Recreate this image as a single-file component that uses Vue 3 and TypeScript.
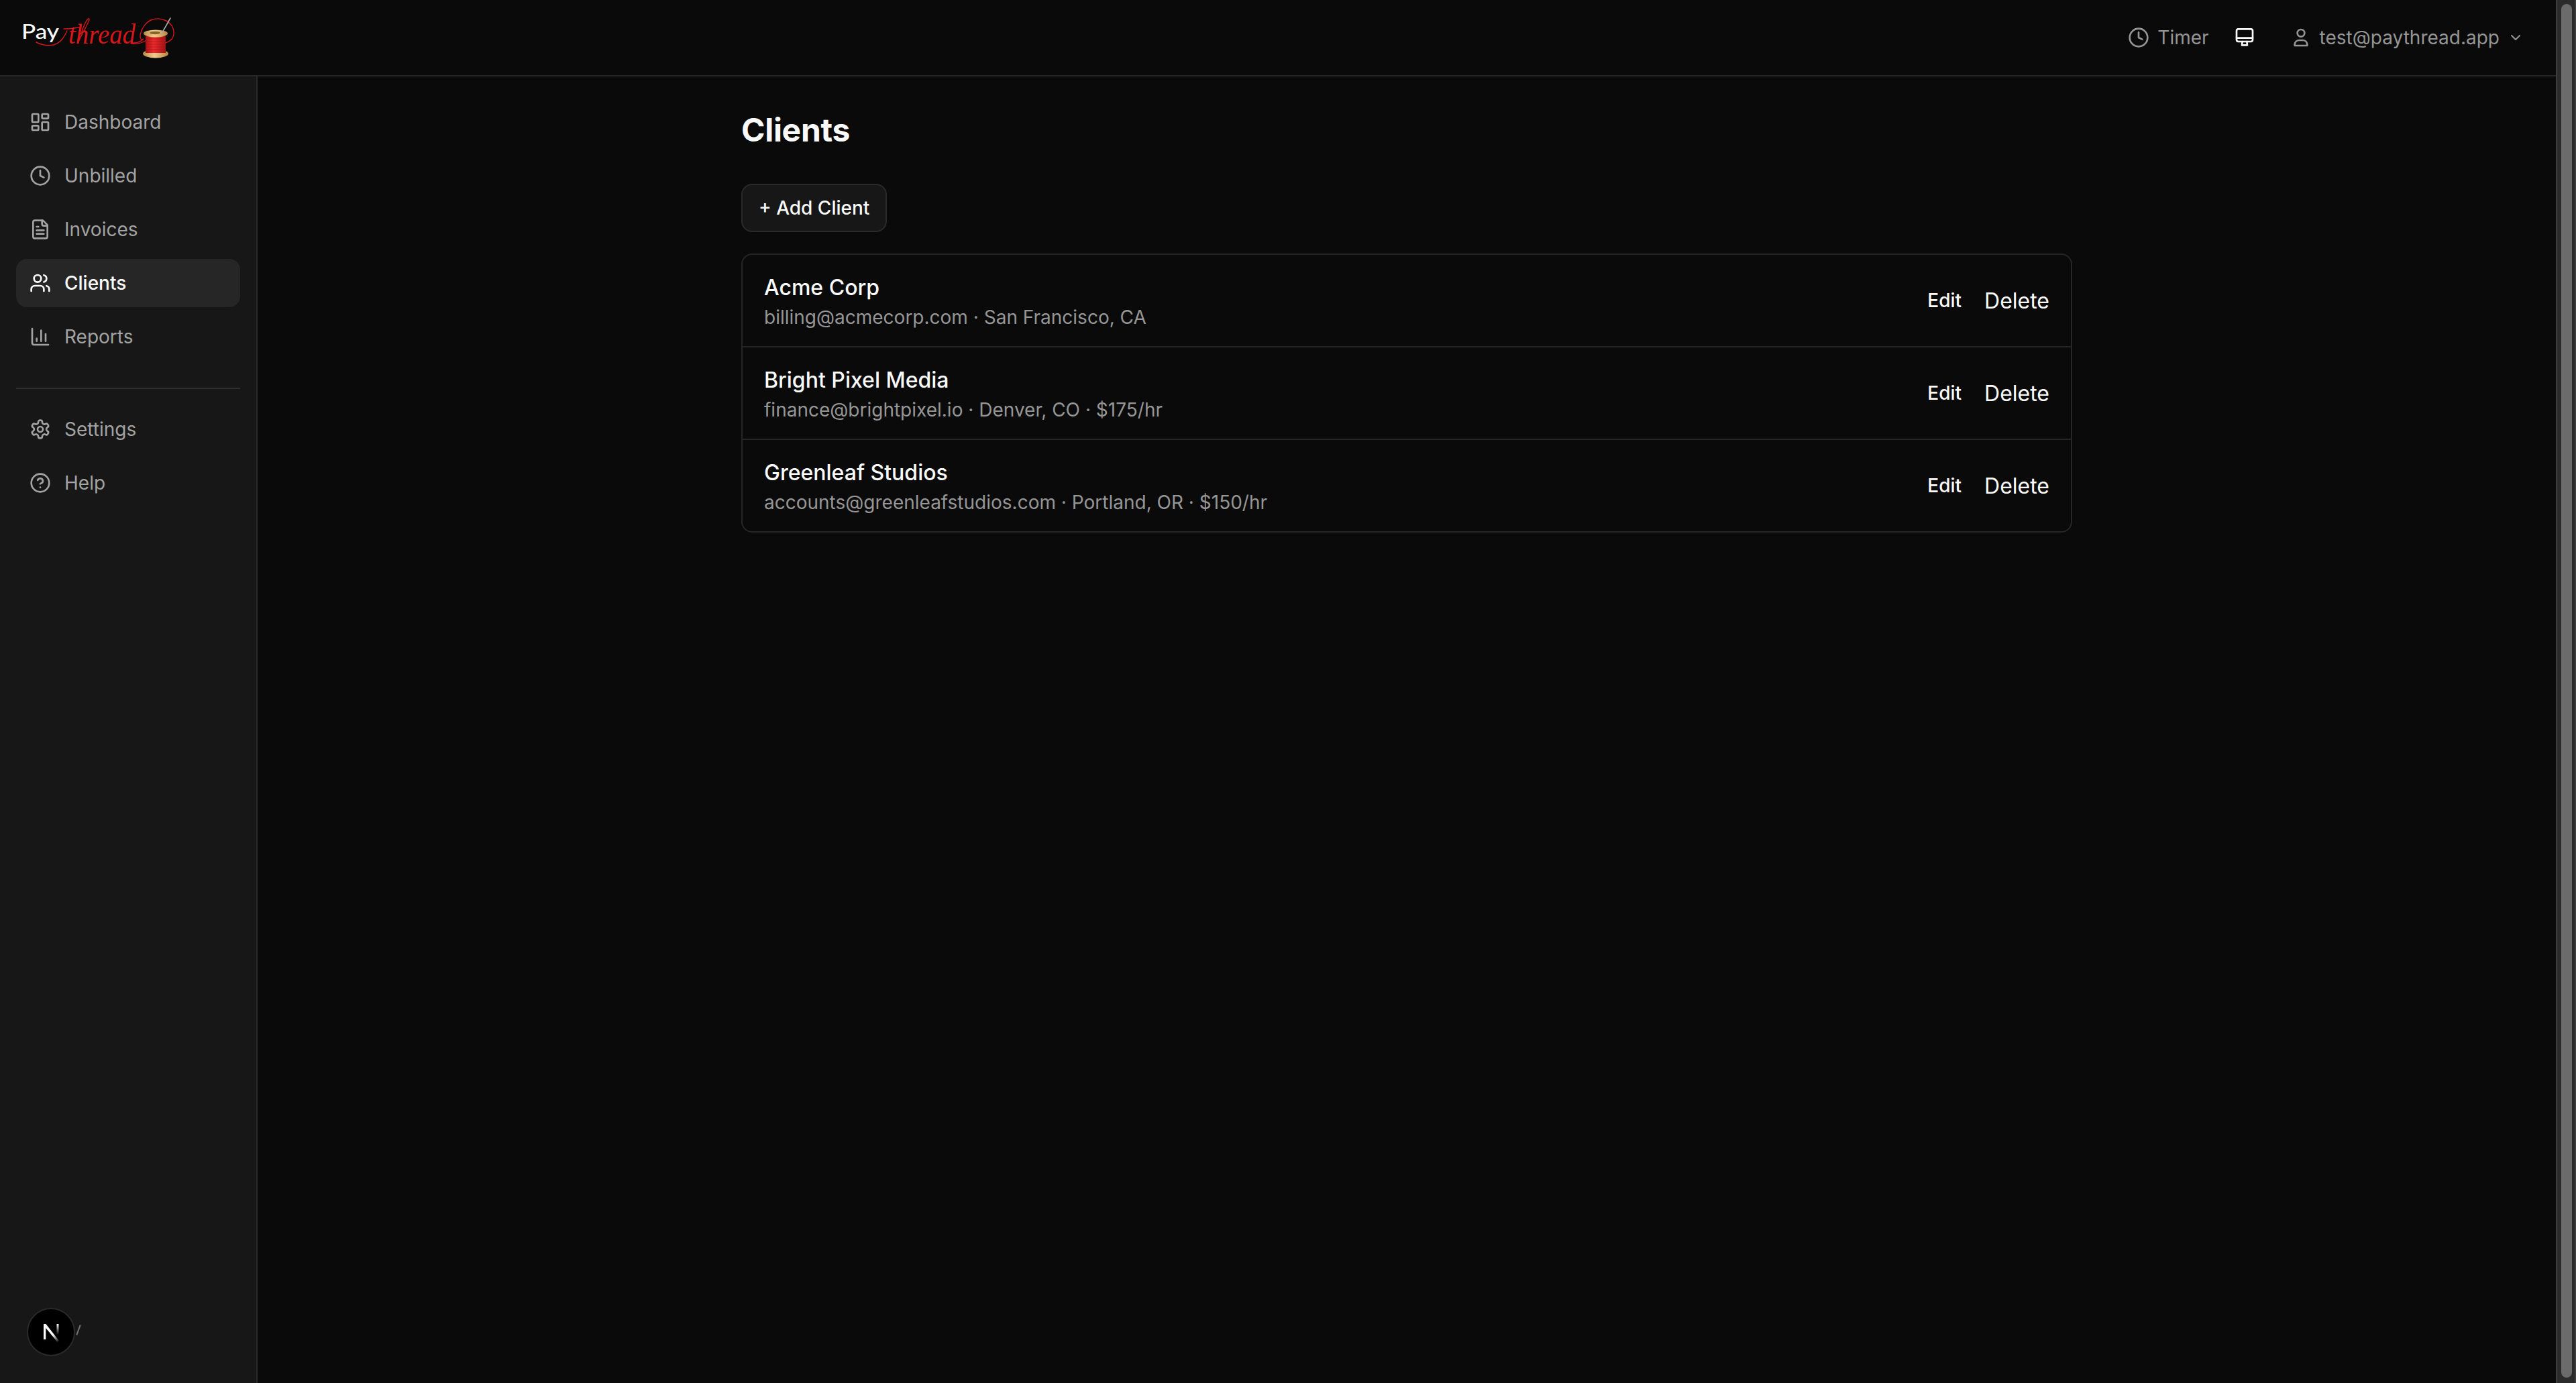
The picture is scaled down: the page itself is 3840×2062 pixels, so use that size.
<script setup lang="ts">
interface NavItem { label: string; icon: string; active?: boolean }
const mainNav: NavItem[] = [
  { label: 'Dashboard', icon: 'dashboard' },
  { label: 'Unbilled', icon: 'clock' },
  { label: 'Invoices', icon: 'file' },
  { label: 'Clients', icon: 'users', active: true },
  { label: 'Reports', icon: 'chart' },
]
const subNav: NavItem[] = [
  { label: 'Settings', icon: 'settings' },
  { label: 'Help', icon: 'help' },
]
const clients = [
  { name: 'Acme Corp', meta: 'billing@acmecorp.com · San Francisco, CA' },
  { name: 'Bright Pixel Media', meta: 'finance@brightpixel.io · Denver, CO · $175/hr' },
  { name: 'Greenleaf Studios', meta: 'accounts@greenleafstudios.com · Portland, OR · $150/hr' },
]
const icons: Record<string, string> = {
  dashboard: '<rect width="7" height="9" x="3" y="3" rx="1"/><rect width="7" height="5" x="14" y="3" rx="1"/><rect width="7" height="9" x="14" y="12" rx="1"/><rect width="7" height="5" x="3" y="16" rx="1"/>',
  clock: '<circle cx="12" cy="12" r="10"/><polyline points="12 6 12 12 16 14"/>',
  file: '<path d="M15 2H6a2 2 0 0 0-2 2v16a2 2 0 0 0 2 2h12a2 2 0 0 0 2-2V7Z"/><path d="M14 2v4a2 2 0 0 0 2 2h4"/><path d="M10 9H8"/><path d="M16 13H8"/><path d="M16 17H8"/>',
  users: '<path d="M16 21v-2a4 4 0 0 0-4-4H6a4 4 0 0 0-4 4v2"/><circle cx="9" cy="7" r="4"/><path d="M22 21v-2a4 4 0 0 0-3-3.87"/><path d="M16 3.13a4 4 0 0 1 0 7.75"/>',
  chart: '<path d="M3 3v16a2 2 0 0 0 2 2h16"/><path d="M18 17V9"/><path d="M13 17V5"/><path d="M8 17v-3"/>',
  settings: '<path d="M12.22 2h-.44a2 2 0 0 0-2 2v.18a2 2 0 0 1-1 1.73l-.43.25a2 2 0 0 1-2 0l-.15-.08a2 2 0 0 0-2.73.73l-.22.38a2 2 0 0 0 .73 2.73l.15.1a2 2 0 0 1 1 1.72v.51a2 2 0 0 1-1 1.74l-.15.09a2 2 0 0 0-.73 2.73l.22.38a2 2 0 0 0 2.73.73l.15-.08a2 2 0 0 1 2 0l.43.25a2 2 0 0 1 1 1.73V20a2 2 0 0 0 2 2h.44a2 2 0 0 0 2-2v-.18a2 2 0 0 1 1-1.73l.43-.25a2 2 0 0 1 2 0l.15.08a2 2 0 0 0 2.73-.73l.22-.39a2 2 0 0 0-.73-2.73l-.15-.08a2 2 0 0 1-1-1.74v-.5a2 2 0 0 1 1-1.74l.15-.09a2 2 0 0 0 .73-2.73l-.22-.38a2 2 0 0 0-2.73-.73l-.15.08a2 2 0 0 1-2 0l-.43-.25a2 2 0 0 1-1-1.73V4a2 2 0 0 0-2-2z"/><circle cx="12" cy="12" r="3"/>',
  help: '<circle cx="12" cy="12" r="10"/><path d="M9.09 9a3 3 0 0 1 5.83 1c0 2-3 3-3 3"/><path d="M12 17h.01"/>',
}
</script>

<template>
  <div class="shell">
    <div class="page">
      <header class="topbar">
        <svg class="logo" width="280" height="112" viewBox="0 0 280 112">
          <defs>
            <linearGradient id="wood" x1="0" x2="1" y1="0" y2="0">
              <stop offset="0" stop-color="#b98a48" />
              <stop offset="0.45" stop-color="#f0cd8c" />
              <stop offset="1" stop-color="#b5843f" />
            </linearGradient>
            <linearGradient id="redspool" x1="0" x2="1" y1="0" y2="0">
              <stop offset="0" stop-color="#a81416" />
              <stop offset="0.4" stop-color="#ec2a2c" />
              <stop offset="1" stop-color="#a31215" />
            </linearGradient>
          </defs>
          <text x="32" y="58" class="logo-pay" textLength="56" lengthAdjust="spacingAndGlyphs">Pay</text>
          <text x="102" y="65" class="logo-thread" textLength="100" lengthAdjust="spacingAndGlyphs">thread</text>
          <g fill="none" stroke="#d5161a" stroke-width="1.4" stroke-linecap="round">
            <path d="M54 63 C68 70 84 70 93 58 C96 54 98 50 100 46" />
            <path d="M95 43 C104 43 110 42 118 41" />
            <path d="M118 60 C124 46 134 32 133 28 C130 26 124 40 121 50" />
            <path d="M199 64 C205 64 210 62 214 58 C205 64 208 38 225 30 C240 24 258 32 259 48 C260 56 254 62 247 64" />
            <path d="M196 65 C204 66 212 64 218 60" />
          </g>
          <ellipse cx="232" cy="80" rx="19" ry="6.5" fill="url(#wood)" />
          <rect x="217" y="54" width="30" height="25" fill="url(#redspool)" />
          <g stroke="#8f0f12" stroke-width="0.6" opacity="0.7">
            <path d="M217 58h30M217 62h30M217 66h30M217 70h30M217 74h30" />
          </g>
          <ellipse cx="232" cy="50" rx="18" ry="5.5" fill="url(#wood)" />
          <ellipse cx="231" cy="49" rx="8" ry="2.2" fill="#8a6229" />
          <path d="M241 50 L254 27" stroke="#a9a9ad" stroke-width="1.6" stroke-linecap="round" />
        </svg>
        <div class="topbar-right">
          <div class="top-timer">
            <svg class="icon" viewBox="0 0 24 24" v-html="icons.clock"></svg>
            <span>Timer</span>
          </div>
          <svg class="icon monitor" viewBox="0 0 24 24">
            <rect x="3" y="2.5" width="18" height="14" rx="2" />
            <path d="M3 12.5h18" />
            <path d="M9.5 16.5 9 20.5h6l-.5-4" />
          </svg>
          <div class="top-user">
            <svg class="icon" viewBox="0 0 24 24">
              <circle cx="12" cy="7" r="4" />
              <path d="M5 21v-1.500A5 5 0 0 1 10 15h4a5 5 0 0 1 5 4.500V21Z" />
            </svg>
            <span>test@paythread.app</span>
            <svg class="chevron" viewBox="0 0 24 24"><path d="m6 9 6 6 6-6" /></svg>
          </div>
        </div>
      </header>
      <div class="body">
        <aside class="sidebar">
          <nav class="nav">
            <a v-for="item in mainNav" :key="item.label" class="nav-item" :class="{ active: item.active }">
              <svg class="nav-icon" viewBox="0 0 24 24" v-html="icons[item.icon]"></svg>
              <span>{{ item.label }}</span>
            </a>
          </nav>
          <div class="side-divider"></div>
          <nav class="nav">
            <a v-for="item in subNav" :key="item.label" class="nav-item">
              <svg class="nav-icon" viewBox="0 0 24 24" v-html="icons[item.icon]"></svg>
              <span>{{ item.label }}</span>
            </a>
          </nav>
          <div class="dev-slash"></div>
          <div class="dev-badge">
            <svg width="40" height="40" viewBox="0 0 40 40">
              <defs>
                <linearGradient id="nfade" x1="0" x2="0" y1="0" y2="1">
                  <stop offset="0" stop-color="#fff" />
                  <stop offset="1" stop-color="#fff" stop-opacity="0" />
                </linearGradient>
                <linearGradient id="ndiag" x1="0" x2="1" y1="0" y2="1">
                  <stop offset="0.6" stop-color="#fff" />
                  <stop offset="1" stop-color="#fff" stop-opacity="0" />
                </linearGradient>
              </defs>
              <path d="M9 8h3.400L32 33l-2.400 2L12.300 14V31H9Z" fill="url(#ndiag)" />
              <rect x="28.500" y="8" width="3" height="16" fill="url(#nfade)" />
            </svg>
          </div>
        </aside>
        <main class="main">
          <div class="content">
            <h1 class="title">Clients</h1>
            <button class="add-btn" type="button">+ Add Client</button>
            <section class="list">
              <div v-for="c in clients" :key="c.name" class="row">
                <div class="row-text">
                  <div class="row-name">{{ c.name }}</div>
                  <div class="row-meta">{{ c.meta }}</div>
                </div>
                <div class="row-actions">
                  <button class="edit" type="button">Edit</button>
                  <button class="delete" type="button">Delete</button>
                </div>
              </div>
            </section>
          </div>
        </main>
      </div>
    </div>
    <div class="scrollbar"><div class="thumb"></div></div>
  </div>
</template>

<style>
html, body { margin: 0; background: #0a0a0a; overflow: hidden; }
</style>

<style scoped>
.shell {
  display: flex;
  height: 2062px;
  background: #0a0a0a;
  color: #fafafa;
  font-family: Inter, "Liberation Sans", sans-serif;
  overflow: hidden;
}
.page { flex: 1; min-width: 0; display: flex; flex-direction: column; }
.topbar {
  height: 112px;
  flex: none;
  display: flex;
  align-items: center;
  justify-content: space-between;
  padding-right: 48px;
  border-bottom: 2px solid #262626;
}
.logo { display: block; flex: none; }
.logo-pay { font-family: Lato, Inter, sans-serif; font-size: 31px; font-weight: 500; fill: #fafafa; }
.logo-thread { font-family: "Liberation Serif", serif; font-style: italic; font-size: 42px; fill: #d5161a; }
.topbar-right { display: flex; align-items: center; color: #969696; font-size: 28px; }
.icon { width: 32px; height: 32px; fill: none; stroke: currentColor; stroke-width: 2; stroke-linecap: round; stroke-linejoin: round; flex: none; }
.top-timer { display: flex; align-items: center; gap: 12px; }
.monitor { color: #fafafa; margin-left: 37px; }
.top-user { display: flex; align-items: center; gap: 12px; margin-left: 52px; }
.chevron { width: 24px; height: 24px; fill: none; stroke: currentColor; stroke-width: 2; stroke-linecap: round; stroke-linejoin: round; }
.body { flex: 1; min-height: 0; display: flex; }
.sidebar {
  position: relative;
  width: 382px;
  flex: none;
  box-sizing: content-box;
  background: #171717;
  border-right: 2px solid #2a2a2a;
  padding: 0;
}
.nav { display: flex; flex-direction: column; gap: 8px; padding: 0 24px; margin-top: 32px; }
.nav + .side-divider { margin-top: 40px; }
.side-divider + .nav { margin-top: 24px; }
.side-divider { height: 2px; background: #2e2e2e; margin: 0 24px; }
.nav-item {
  height: 72px;
  display: flex;
  align-items: center;
  gap: 20px;
  padding: 0 20px;
  border-radius: 16px;
  color: #a3a3a3;
  font-size: 28px;
}
.nav-item.active { background: #262626; color: #fafafa; font-weight: 500; }
.nav-icon { width: 32px; height: 32px; fill: none; stroke: currentColor; stroke-width: 2; stroke-linecap: round; stroke-linejoin: round; flex: none; }
.dev-badge {
  position: absolute;
  left: 40px;
  top: 1836px;
  width: 72px;
  height: 72px;
  box-sizing: border-box;
  border: 2px solid #2a2a2a;
  border-radius: 50%;
  background: #000;
  display: flex;
  align-items: center;
  justify-content: center;
}
.dev-slash {
  position: absolute;
  left: 116px;
  top: 1861px;
  width: 2px;
  height: 16px;
  background: #777;
  transform: rotate(20deg);
}
.main { flex: 1; min-width: 0; }
.content { width: 1984px; margin: 0 auto; padding-top: 48px; }
.title { margin: 0; font-size: 48px; line-height: 64px; font-weight: 700; letter-spacing: -0.3px; color: #fafafa; }
.add-btn {
  display: block;
  margin-top: 48px;
  height: 72px;
  padding: 0 24px;
  border: 2px solid #2a2a2a;
  border-radius: 16px;
  background: #171717;
  color: #fafafa;
  font: 500 28px Inter, sans-serif;
}
.list { margin-top: 32px; border: 2px solid #262626; border-radius: 16px; }
.row {
  height: 136px;
  display: flex;
  align-items: center;
  justify-content: space-between;
  padding: 0 32px;
  border-bottom: 2px solid #262626;
}
.row:last-child { border-bottom: 0; }
.row-text { padding-top: 2px; }
.row-name { font-size: 32px; line-height: 48px; font-weight: 500; color: #fafafa; }
.row-meta { font-size: 28px; line-height: 40px; color: #969696; }
.row-actions { display: flex; align-items: center; gap: 34px; }
.edit, .delete { border: 0; padding: 0; background: none; color: #fafafa; font-family: Inter, sans-serif; }
.edit { font-size: 28px; font-weight: 500; }
.delete { font-size: 32px; font-weight: 400; }
.scrollbar {
  width: 30px;
  flex: none;
  box-sizing: border-box;
  background: #2b2b2b;
  border-left: 2px solid #3e3e3e;
  border-right: 2px solid #3e3e3e;
  padding: 6px 4px 8px 6px;
}
.thumb { height: 100%; background: #6b6b6b; border-radius: 8px; }
</style>
